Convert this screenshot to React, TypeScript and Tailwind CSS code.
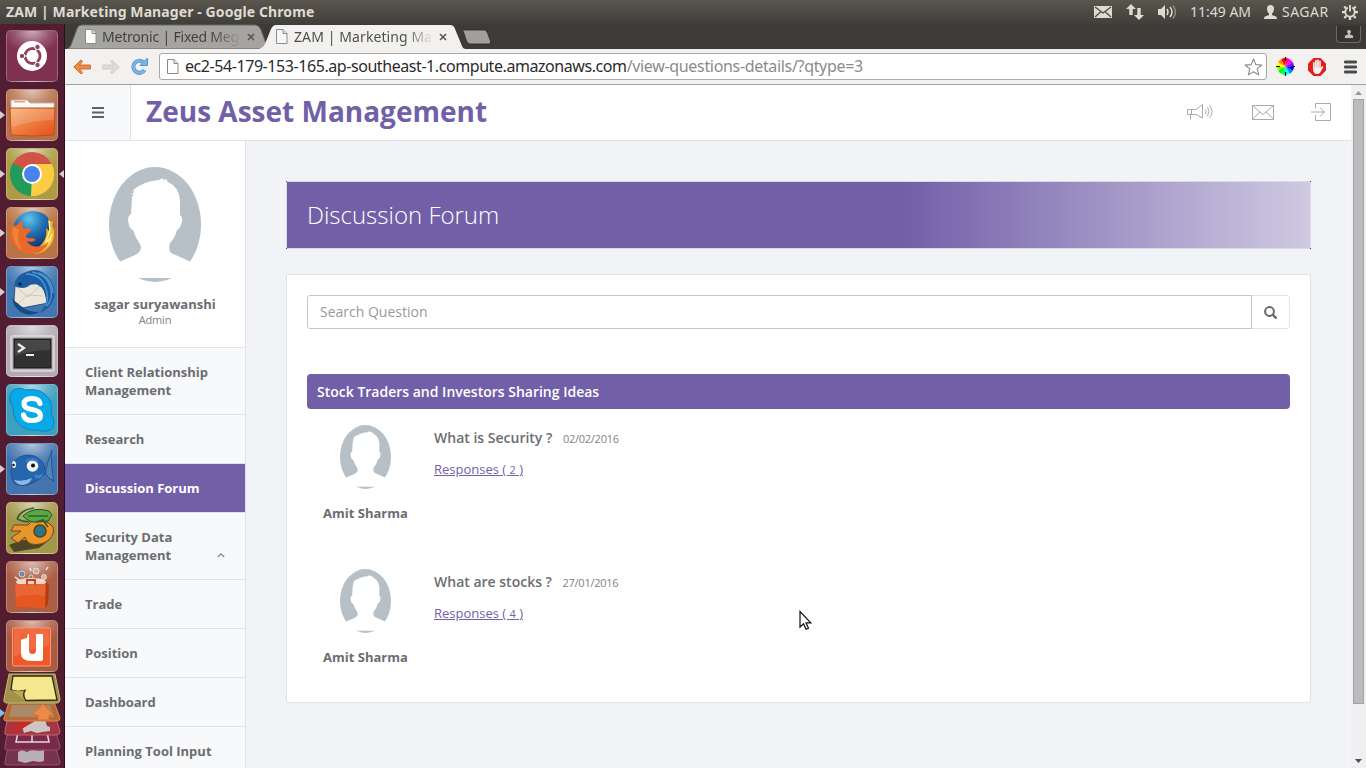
import React from "react";

const GLOSS = "radial-gradient(ellipse 60% 45% at 50% 0%, rgba(255,255,255,.6) 0%, rgba(255,255,255,.18) 60%, rgba(255,255,255,0) 100%)";

function Tile({ bg, left, right, children }: { bg: string; left?: boolean; right?: boolean; children: React.ReactNode }) {
  return (
    <div className="relative flex h-[52px] w-full shrink-0 justify-center pr-px">
      {left && <span className="absolute left-0 top-[22px] border-y-[4px] border-l-[5px] border-y-transparent border-l-[#d5cdd0]" />}
      {right && <span className="absolute right-0 top-[22px] border-y-[4px] border-r-[5px] border-y-transparent border-r-[#d5cdd0]" />}
      <div
        className="h-[52px] w-[52px] overflow-hidden rounded-[5px] border border-white/25"
        style={{ background: `${GLOSS}, ${bg}` }}
      >
        <svg viewBox="1 1 50 50" className="block h-[50px] w-[50px]">{children}</svg>
      </div>
    </div>
  );
}

function Launcher() {
  return (
    <aside className="flex w-[65px] shrink-0 flex-col gap-[7px] overflow-hidden border-r border-[#2e0c19] bg-[#521c31] pt-[6px]">
      <Tile bg="#7f3150">
        <circle cx="26" cy="26" r="15" fill="#fff" />
        <circle cx="26.500" cy="26" r="7.500" fill="none" stroke="#93415c" strokeWidth="3" />
        <path d="M26.500 26H15M26.500 26l6-10.400M26.500 26l6 10.400" stroke="#fff" strokeWidth="1.200" />
        <circle cx="26.500" cy="26" r="5.900" fill="#fff" />
        <g fill="#93415c" stroke="#fff" strokeWidth="1">
          <circle cx="16" cy="26" r="2.700" />
          <circle cx="31.500" cy="17" r="2.700" />
          <circle cx="31.500" cy="35" r="2.700" />
        </g>
      </Tile>
      <Tile bg="#b5704c" left>
        <defs>
          <linearGradient id="fold" x1="0" y1="0" x2="1" y2="1">
            <stop offset="0" stopColor="#f3b173" /><stop offset=".5" stopColor="#ee7c3d" /><stop offset="1" stopColor="#e4501f" />
          </linearGradient>
        </defs>
        <path d="M5 11h16l3 3h24v7H5z" fill="#fafafa" stroke="#c9b0a5" />
        <path d="M8 12.800h11" stroke="#f0a176" strokeWidth="1.600" />
        <path d="M4 19h45l-1 27q-22 2-43 0z" fill="url(#fold)" stroke="#c4501f" />
        <path d="M5 20h43l-.4 11q-18 0-42 7z" fill="#fff" opacity=".16" />
      </Tile>
      <Tile bg="#ad9b45" left right>
        <path d="M26 26L6.900 15A22 22 0 0 1 45.600 16z" fill="#d05347" />
        <path d="M26 26L6.900 15A22 22 0 0 0 25 48l9-17z" fill="#229a5a" />
        <path d="M26 26l-1 22A22 22 0 0 0 45.600 16H26z" fill="#fcd147" />
        <path d="M45.600 16H26l8 15-9 17A22 22 0 0 0 45.600 16" fill="#fbcb42" />
        <circle cx="26" cy="26" r="10" fill="#fff" />
        <circle cx="26" cy="26" r="8" fill="#4784ea" />
      </Tile>
      <Tile bg="#b87446" left>
        <defs>
          <radialGradient id="globe" cx=".4" cy=".2" r=".7"><stop offset="0" stopColor="#61c4ec" /><stop offset=".5" stopColor="#2273b5" /><stop offset="1" stopColor="#123a76" /></radialGradient>
        </defs>
        <circle cx="27" cy="24" r="20" fill="url(#globe)" />
        <path d="M42 11l2 3 3 1-1 3 2 5q1 12-6 18-6 6-15 6-6 0-10-3 12 1 19-7 6-8 4-16l3 3q1-6-1-13z" fill="#f4b731" />
        <path d="M43 14l1 9-4 12q4-2 6-8-2 12-13 17" stroke="#fff08a" strokeWidth="1.500" fill="none" />
        <path d="M6 16l-1 4q-3 12 4 19 7 9 18 8 11-1 16-12-8 6-16 4-5-2-6-5 5 2 9-1l-3-2q-5 1-7-1l1-3 5-4-5-2-4 1-1-9-5 5-3 1z" fill="#e9682a" />
        <path d="M7 20q-2 15 9 23-6-11-3-20z" fill="#f39a3c" opacity=".6" />
      </Tile>
      <Tile bg="#4476b0" left>
        <path d="M9 20l27-3 6 20-26 5-8-7z" fill="#ece6da" stroke="#1b3f6f" strokeWidth=".8" />
        <path d="M9 20l13 11 14-13M12 38l9-9 16 1" stroke="#c9c1b2" strokeWidth=".8" fill="none" />
        <path d="M8 21Q9 9 20 6q14-6 24 7 6 9 4 19-3 11-15 15 6-5 7-12 0-9-5-14-5-4-10-3-6 7-17 2z" fill="#1a5da4" />
        <path d="M6 32q2 12 13 16 8 2 14-2-12 0-18-6-6-4-9-8z" fill="#124a8a" />
        <path d="M20 8q14 0 19 12t0 20M26 6q14 2 18 14t-3 20M33 7q13 5 14 20" stroke="#4c96d2" strokeWidth="1.400" fill="none" />
        <circle cx="14" cy="18" r="1.500" fill="#06172f" />
      </Tile>
      <Tile bg="#b2abb0">
        <rect x="5" y="11" width="43" height="35" rx="1" fill="#b9b5b8" stroke="#f2eff1" />
        <rect x="8" y="14" width="37" height="29" fill="#303130" stroke="#161616" />
        <path d="M9 15h35v10Q25 25 9 31z" fill="#fff" opacity=".1" />
        <path d="M12 19l6 4-6 4" stroke="#eee" strokeWidth="2.200" fill="none" />
        <path d="M20 30h8" stroke="#eee" strokeWidth="2" />
      </Tile>
      <Tile bg="#3e9fbe">
        <path d="M6 7q7-5 13-1 17-3 25 10 3 7 1 13 5 8 1 16-6 4-13 1-14 2-22-8-5-7-4-15Q1 14 6 7z" fill="#09a9e7" stroke="#0687bf" />
        <path d="M34 19.500q-1-5-8-5-8 0-8 5.500 0 4.200 8 5.500 8.500 1.300 8.500 6 0 5-8.500 5-7.500 0-8.500-5.500" fill="none" stroke="#fff" strokeWidth="5.200" strokeLinecap="round" />
      </Tile>
      <Tile bg="#4374ad" left>
        <path d="M39 30q4-16 7-23-2 12 2 31-6-2-9-8z" fill="#4a84be" stroke="#1c4c85" strokeWidth=".8" />
        <path d="M6 21Q12 12 23 12q13 1 16 14 1 3 0 5-5 6-11 8-9 6-19 2-6-6-3-20z" fill="#2465ae" stroke="#1b5598" />
        <path d="M8 37q9 2 18-2-2 6-9 7-6 0-9-5z" fill="#8db9e2" />
        <path d="M29 31q4 3 8-1l-1 4q-4 3-7 0z" fill="#4083c8" />
        <circle cx="26.500" cy="23" r="5.800" fill="#f2f2f2" /><circle cx="27" cy="22.500" r="2" fill="#111" />
        <path d="M20 19q4-5 12-1" stroke="#3c7dc2" strokeWidth="2.500" fill="none" />
        <ellipse cx="8" cy="21.500" rx="2" ry="3.500" fill="#e7ecf2" /><circle cx="7.500" cy="22" r="1.200" fill="#111" />
      </Tile>
      <Tile bg="#a3984a">
        <path d="M3 43l13-5 26 1-9 7-25 4z" fill="#302c1c" opacity=".75" />
        <path d="M5 36l10-7-10 0 3-6 14 0 4-4q14-3 21 6 2 6-4 13-8 6-18 4-5-2-6-7l-7 6z" fill="#e8952c" stroke="#7b4316" />
        <circle cx="34" cy="29" r="6" fill="#24798a" stroke="#68390e" strokeWidth="1.500" />
        <path d="M17 14Q27 4 43 9l3 4-4 6-10 1q-9 1-15-6z" fill="#58a845" stroke="#254e1f" />
        <path d="M11 17Q14 8 28 6M22 14l20 0M30 20l7-2 5 7M11 17q6 3 12 3" stroke="#2e6429" strokeWidth="1.700" fill="none" />
      </Tile>
      <Tile bg="#ab5f45">
        <g opacity=".9">
          <circle cx="16" cy="13" r="3" fill="#6b8aa9" stroke="#fff" strokeWidth=".7" /><circle cx="30" cy="10" r="3" fill="#bcb6b0" stroke="#fff" strokeWidth=".7" />
          <circle cx="38" cy="16" r="2.500" fill="#d6b9ae" stroke="#fff" strokeWidth=".7" /><circle cx="25" cy="16" r="2" fill="#79859a" stroke="#fff" strokeWidth=".7" />
          <path d="M9 16l4 3M24 7l1 3M40 9l2-3M32 18l5 2" stroke="#fff" strokeWidth="1.300" />
        </g>
        <ellipse cx="25" cy="21" rx="15" ry="4" fill="#ffe9dc" opacity=".85" />
        <path d="M9 23h31l-1 24-29-1z" fill="#e7561f" /><path d="M40 21l3 3-1 19-3 4z" fill="#b53b10" />
        <path d="M21 24v-5h8v5" fill="none" stroke="#c14012" strokeWidth="1.800" />
        <path d="M9 23h30v12q-13-3-29 1z" fill="#fff" opacity=".09" />
      </Tile>
      <Tile bg="#aa5c43">
        <rect x="6.500" y="8" width="38" height="38" rx="1.500" fill="#f0582a" stroke="#ff9d7b" />
        <path d="M8 9h35v17q-15 1-35 11z" fill="#fff" opacity=".12" />
        <path d="M15 14h8v16q0 4 3.500 4t3.500-4V14h7v25q0 2-2 2H25q-10 0-10-8z" fill="#fff" />
        <path d="M14 20v-7h8l-1 5z" fill="#f0653a" />
      </Tile>
      <svg viewBox="0 0 65 96" className="-mt-[7px] block h-[96px] w-[65px] shrink-0">
        <path d="M9 70h45l6 20q0 3-3 3H7q-3 0-2-3z" fill="#76324f" stroke="#94536b" />
        <path d="M18 80l4-2 5 2 6-3 5 2 6-1v11l-4 1-7-1-8 2-7-2z" fill="#b9b0b4" />
        <path d="M9 54h45l6 20q0 4-3 4H7q-3 0-2-4z" fill="#7a2a49" stroke="#9b526a" />
        <path d="M18 60l-2 10h33l-2-10M32 60v10" fill="none" stroke="#e7d8dd" strokeWidth="1.500" />
        <path d="M9 40h45l6 19q0 4-3 4H7q-3 0-2-4z" fill="#a53543" stroke="#c3646a" />
        <path d="M22 54l8-8 14-2 3 10 3 1v4l-8 1-5 1-6-2-7 2z" fill="#ccc6c6" />
        <path d="M11 59q-1-3 5-6l20-10 4 3-20 12q-5 3-9 1z" fill="#c52b28" />
        <path d="M9 30h45l6 16q0 3-3 3H7q-4 0-3-3z" fill="#b66a3a" stroke="#e08b4a" />
        <path d="M12 33h38l4 12H9z" fill="#a98a67" />
        <path d="M43 32l11 11h-5v5H38v-5h-6z" fill="#ee8a47" stroke="#d86f30" />
        <path d="M9 2h46l5 25q0 4-3 4H7q-4 0-3-4z" fill="#a1924b" stroke="#c6b970" />
        <path d="M13 4h39l5 24-31 .5q-4-5-1-10-9 2-14-1z" fill="#f4e78f" stroke="#2d2912" strokeWidth="1.300" />
        <path d="M11 17.500l14 11q-4-5-1-10-7 2-13-1z" fill="#b9ab4e" />
        <path d="M0 37l5 4-5 4z" fill="#79c4e8" />
      </svg>
    </aside>
  );
}

function SystemBar() {
  return (
    <div className="flex h-6 shrink-0 items-center justify-between bg-gradient-to-b from-[#59564d] to-[#403f3a] pl-[6px] pr-[8px] font-['Noto_Sans',sans-serif] text-[#dfdbd2]">
      <span className="whitespace-nowrap text-[14px] font-bold leading-6 tracking-[0.1px]">ZAM | Marketing Manager - Google Chrome</span>
      <div className="flex items-center text-[14px]">
        <svg width="18" height="12" viewBox="0 0 18 12" className="mr-[14px]">
          <rect width="18" height="12" fill="#dfdbd2" />
          <path d="M1 1l8 6 8-6M1 11l5.500-5M17 11l-5.500-5" stroke="#4c4a43" strokeWidth="1.300" fill="none" />
        </svg>
        <svg width="18" height="16" viewBox="0 0 18 16" className="mr-[14px]">
          <path d="M5 0l5 5H6.700v6H3.300V5H0zM13 16l-5-5h3.300V4h3.400v7H18z" fill="#dfdbd2" />
        </svg>
        <svg width="20" height="16" viewBox="0 0 20 16" className="mr-[12px]">
          <path d="M0 5h3l4-4v14l-4-4H0z" fill="#dfdbd2" />
          <path d="M9 5q2 3 0 6M12 3q4 5 0 10" stroke="#dfdbd2" strokeWidth="1.500" fill="none" />
          <path d="M15 1.500q5 6.500 0 13" stroke="#8f8c83" strokeWidth="1.500" fill="none" />
        </svg>
        <span className="w-[62px] whitespace-nowrap leading-5">11:49 AM</span>
        <svg width="13" height="14" viewBox="0 0 13 14" className="ml-[12px] mr-[5px]">
          <path d="M6.500 0q3.500 0 3.500 4 0 3-2 4.500v1.500l4 1.500q1 .5 1 2.500H0q0-2 1-2.500L5 10V8.500Q3 7 3 4q0-4 3.500-4z" fill="#dfdbd2" />
        </svg>
        <span className="w-[48px] whitespace-nowrap leading-5 tracking-[0.5px]">SAGAR</span>
        <svg width="16" height="16" viewBox="0 0 16 16" className="ml-[12px]" fill="none" stroke="#dfdbd2">
          <path d="M5.800 3.700a4.800 4.800 0 1 0 4.400 0M8 1v6.500" strokeWidth="1.900" />
          <path d="M8 13v3M0 8.200h3M13 8.200h3M2.300 2.500l1.600 1.600M13.700 2.500l-1.600 1.600M2.300 14l1.900-1.900M13.700 14l-1.900-1.900" strokeWidth="2.300" />
        </svg>
      </div>
    </div>
  );
}

function PageIcon({ className, fill = "#fdfdfd" }: { className?: string; fill?: string }) {
  return (
    <svg width="12" height="15" viewBox="0 0 12 15" className={className}>
      <path d="M.5.500h6.500l4 4V14.500H.5z" fill={fill} stroke="#8b8b8b" />
      <path d="M7 .5v4h4" fill="#e2e2e2" stroke="#8b8b8b" />
    </svg>
  );
}

function CloseX() {
  return (
    <svg width="8" height="8" viewBox="0 0 8 8" className="ml-[7px] shrink-0">
      <path d="M1 1l6 6M7 1L1 7" stroke="#54534f" strokeWidth="1.500" />
    </svg>
  );
}

function Tabs() {
  return (
    <div className="relative flex h-[25px] shrink-0 bg-[#3c3b37] font-['Noto_Sans',sans-serif]">
      <svg width="440" height="25" viewBox="0 0 440 25" className="absolute left-0 top-0">
        <path d="M2 25Q5 24 6 21L12 5q1-4 5-4H190q4 0 6 5l7 19z" fill="#a5a4a1" stroke="#6a6965" />
        <path d="M194 25q4-1 6-5l6-15q2-4 5-4H385q4 0 5 4l7 17q1 3 4 3z" fill="#f2f1f0" />
        <path d="M397.500 6h22q2 0 3 3l3 8q1 3-2 3h-18q-3 0-4-3l-3-9q-1-2-1-2z" fill="#a09f9b" stroke="#2b2a27" strokeWidth=".8" />
      </svg>
      <div className="relative flex w-[191px] items-center pl-[20px]">
        <PageIcon className="mr-[5px] shrink-0" />
        <span className="w-[138px] whitespace-nowrap bg-[linear-gradient(90deg,#403f3b_80%,#a5a4a1_101%)] bg-clip-text text-[14px] tracking-[-0.2px] text-transparent">
          Metronic | Fixed Meg
        </span>
        <CloseX />
      </div>
      <div className="relative flex items-center pl-[20px]">
        <PageIcon className="mr-[6px] shrink-0" fill="#f8f8f8" />
        <span className="w-[138px] whitespace-nowrap bg-[linear-gradient(90deg,#4a4a48_80%,#f2f1f0_101%)] bg-clip-text text-[14px] tracking-[0.1px] text-transparent">
          ZAM | Marketing Ma
        </span>
        <CloseX />
      </div>
      <div className="ml-auto mr-[5px] mt-[2px] flex h-[17px] w-[25px] items-center justify-center rounded-b-[4px] border border-t-0 border-[#6b6a66] bg-[#353430]">
        <svg width="10" height="10" viewBox="0 0 10 10"><path d="M5 .5a2.300 2.300 0 0 1 1 4.400l3.500 1.600V9.500H.5V6.500l3.500-1.600A2.300 2.300 0 0 1 5 .5z" fill="#bfbeba" stroke="#1c1b19" strokeWidth=".6" /></svg>
      </div>
    </div>
  );
}

function Toolbar() {
  return (
    <div className="flex h-9 shrink-0 items-center border-b border-[#a3a19e] bg-[#f2f1f0] pl-[8px] font-['Noto_Sans',sans-serif]">
      <svg width="18" height="16" viewBox="0 0 18 16" className="mr-[11px]">
        <path d="M.8 8L8 1l1.500 1.500L6.500 6H17q1 0 1 2t-1 2H6.500l3 3.500L8 15z" fill="#ec8b42" stroke="#c4602a" strokeWidth=".9" />
      </svg>
      <svg width="18" height="16" viewBox="0 0 18 16" className="mr-[11px]">
        <path d="M17.200 8L10 1 8.500 2.500l3 3.500H1Q0 6 0 8t1 2h10.500l-3 3.500L10 15z" fill="#dddcda" stroke="#c9c8c6" strokeWidth=".8" />
      </svg>
      <svg width="17" height="17" viewBox="0 0 17 17" className="mr-[11px]">
        <path d="M13.500 12a6 6 0 1 1-1-7.500" fill="none" stroke="#5a95cf" strokeWidth="4" />
        <path d="M9 7.500h7.500V0z" fill="#7fb2e3" stroke="#5a95cf" />
        <path d="M13.500 12a6 6 0 1 1-1-7.500" fill="none" stroke="#7fb2e3" strokeWidth="2.500" />
      </svg>
      <div className="flex h-[27px] w-[1108px] items-center rounded-[3px] border border-[#aaa9a7] bg-white pl-[7px] pr-[3px]">
        <PageIcon className="mr-[6px]" />
        <span className="whitespace-nowrap pb-[2px] text-[16px] leading-[22px] tracking-[-0.33px] text-[#8b8b8b]">
          <span className="tracking-[-0.43px] text-[#2b2b2b]">ec2-54-179-153-165.ap-southeast-1.compute.amazonaws.com</span>/view-questions-details/?qtype=3
        </span>
        <svg width="19" height="18" viewBox="0 0 19 18" className="ml-auto">
          <path d="M9.500 1l2.300 5.600 6 .4-4.600 3.900 1.500 6-5.200-3.200-5.200 3.200 1.500-6L1.200 7l6-.4z" fill="#fff" stroke="#888" strokeWidth="1.100" strokeLinejoin="round" />
        </svg>
      </div>
      <div className="ml-[9px] flex h-[19px] w-[19px] items-center justify-center">
        <svg width="19" height="19" viewBox="0 0 19 19">
          <g transform="translate(9.500 9.500)">
            {["#f0f", "#80f", "#00f", "#08f", "#0ff", "#0f8", "#0f0", "#8f0", "#ff0", "#f80", "#f00", "#f08"].map((c, i) => (
              <path key={c} d="M0 0V-8.500A8.500 8.500 0 0 1 4.300-7.300z" fill={c} transform={`rotate(${i * 30 + 30})`} />
            ))}
            <path d="M0-9.500v4M0 5.500v4M-9.500 0h4M5.500 0h4" stroke="#111" strokeWidth="1.200" />
          </g>
        </svg>
      </div>
      <svg width="18" height="18" viewBox="0 0 18 18" className="ml-[13px]">
        <path d="M5.500 0h7L18 5.500v7L12.500 18h-7L0 12.500v-7z" fill="#e0201f" />
        <path d="M5 10V5q0-1 .8-1t.8 1v4.500h.4V3q0-1 .9-1t.9 1v6.500h.3V2.500q0-1 .9-1t.9 1v7h.3V3.500q0-1 .8-1t.8 1V10l1-1.500q1-.8 1.500.2L12.500 14q-.8 2-3.500 2-4 0-4-6z" fill="#f6f2ef" />
      </svg>
      <svg width="13" height="14" viewBox="0 0 13 14" className="ml-[18px]">
        <path d="M1.300 2h10.400M1.300 7h10.400M1.300 12h10.400" stroke="#4b4b4b" strokeWidth="2.800" strokeLinecap="round" />
      </svg>
    </div>
  );
}

function Avatar({ className, id }: { className: string; id: string }) {
  return (
    <svg viewBox="0 0 92 115" preserveAspectRatio="none" className={className}>
      <defs><clipPath id={id}><ellipse cx="46" cy="57.500" rx="46" ry="57.500" /></clipPath></defs>
      <g clipPath={`url(#${id})`}>
        <path
          d="M0 0H92V80L81 94.500L62 86Q59 83 61 76Q66 71 68 63Q72 61 73 54Q74 50 71 48L71 33Q70 20 59 15L57 12L54 13L54 11L50 13Q35 14 24 23L25 25L22 28L25 27L23 30L22 47Q19 49 19 53Q20 62 24 63Q26 70 31 77L32 80Q32 86 24 89L11 94.500L0 80zM25 111H67V115H25z"
          fill="#b7c0c7"
        />
      </g>
    </svg>
  );
}

const NAV: { label: string; active?: boolean; caret?: boolean }[] = [
  { label: "Client Relationship Management" },
  { label: "Research" },
  { label: "Discussion Forum", active: true },
  { label: "Security Data Management", caret: true },
  { label: "Trade" },
  { label: "Position" },
  { label: "Dashboard" },
  { label: "Planning Tool Input" },
];

function Sidebar() {
  return (
    <nav className="w-[181px] shrink-0 overflow-hidden border-r border-[#e1e2e5] bg-[#f7f9fb]">
      <div className="flex h-[207px] flex-col items-center border-b border-[#e1e2e5] bg-white pt-[26px]">
        <Avatar className="block h-[115px] w-[92px]" id="user" />
        <div className="mt-[13px] text-[13px] font-bold leading-[18px] text-[#6c6d70]">sagar suryawanshi</div>
        <div className="text-[11px] leading-[13px] tracking-[-0.2px] text-[#808285]">Admin</div>
      </div>
      {NAV.map((n) => (
        <a
          key={n.label}
          className={
            "flex items-end justify-between border-b border-[#e1e2e5] px-[20px] py-[15px] text-[13px] font-bold leading-[18px] " +
            (n.active ? "bg-[#715fa8] text-white" : "text-[#6c6d70]")
          }
        >
          <span className="w-[128px]">{n.label}</span>
          {n.caret && (
            <svg width="8" height="18" viewBox="0 0 8 18"><path d="M.8 11L4 7.800 7.200 11" fill="none" stroke="#6f86a6" strokeWidth="1.200" /></svg>
          )}
        </a>
      ))}
    </nav>
  );
}

function Header() {
  return (
    <header className="flex h-14 shrink-0 items-center border-b border-[#e1e2e5] bg-white">
      <div className="flex h-full w-[66px] items-center justify-center border-r border-[#e1e2e5] bg-[#f7f9fb] pl-px">
        <svg width="12" height="11" viewBox="0 0 12 11"><path d="M0 1h12M0 5.500h12M0 10h12" stroke="#606163" strokeWidth="1.800" /></svg>
      </div>
      <h1 className="ml-[15px] pb-[3px] text-[28px] font-bold leading-[40px] text-[#715fa8]">Zeus Asset Management</h1>
      <div className="ml-auto mr-[20px] flex items-center pb-px">
        <svg width="26" height="16" viewBox="0 0 26 16" fill="none" stroke="#aaa9ab">
          <path d="M.5 5.500H9l6.500-5v13.500L9 10.500H.5zM4.500 5.500v5M3.500 11v4.500M18.500 5.500q1.500 2.200 0 4.500M20.500 3.500q3 4 0 8.500M22.500 1.500q5 6 0 12.500" />
        </svg>
        <svg width="22" height="15" viewBox="0 0 22 15" className="ml-[39px]" fill="none" stroke="#aaa9ab">
          <path d="M.5.500h21v14H.5zM.5.500L11 9.500 21.500.5M.5 14l7.500-7M21.500 14L14 7" />
        </svg>
        <svg width="20" height="18" viewBox="0 0 20 18" className="ml-[37px]" fill="none" stroke="#aaa9ab">
          <path d="M4.500 5.500V.5h15v17h-15v-5.500M0 9h13.500M9 4.500l4.500 4.500L9 13.500" />
        </svg>
      </div>
    </header>
  );
}

function Question({ id, title, date, count }: { id: string; title: string; date: string; count: number }) {
  return (
    <article className="flex h-36">
      <div className="flex w-[117px] flex-col items-center">
        <Avatar className="block h-16 w-[51px]" id={id} />
        <div className="mt-[15px] whitespace-nowrap text-[13px] font-bold leading-[18px] text-[#6c6d70]">Amit Sharma</div>
      </div>
      <div className="ml-[10px] pt-[3px]">
        <div className="flex items-baseline gap-[10.5px] leading-5 text-[#6c6d70]">
          <span className="text-[14px] font-semibold">{title}</span>
          <span className="text-[11px] tracking-[-0.25px] text-[#808285]">{date}</span>
        </div>
        <a className="mt-[11px] block text-[13px] leading-[18px] text-[#715fa8] underline">
          Responses ( <span className="text-[11px]">{count}</span> )
        </a>
      </div>
    </article>
  );
}

function Main() {
  return (
    <main className="min-w-0 flex-1 bg-[#f1f3f7] px-[40px] pt-[40px]">
      <div className="relative flex h-[68px] w-[1025px] items-center border border-[#dcdbe4] bg-[linear-gradient(90deg,#715fa8_0%,#715fa8_60%,#b1a7d0_87%,#cfc9e1_100%)] pl-[20px]">
        <span className="absolute -left-px -top-px h-px w-px bg-[#2a42a0]" />
        <span className="absolute -right-px -top-px h-px w-px bg-[#2a42a0]" />
        <span className="absolute -bottom-px -left-px h-px w-px bg-[#2a42a0]" />
        <span className="absolute -bottom-px -right-px h-px w-px bg-[#2a42a0]" />
        <h2 className="text-[24px] font-light leading-8 text-white">Discussion Forum</h2>
      </div>
      <section className="mt-[25px] h-[429px] w-[1025px] rounded-[2px] border border-[#e2e3e6] bg-white px-[20px] pt-[20px]">
        <div className="flex h-[34px]">
          <div className="flex w-[945px] items-center rounded-l-[3px] border border-[#c7c8ca] pb-[2px] pl-[12px] text-[14px] text-[#98999c]">Search Question</div>
          <div className="flex w-[38px] items-center justify-center rounded-r-[3px] border border-l-0 border-[#e2e3e6] pr-px">
            <svg width="13" height="13" viewBox="0 0 13 13" fill="none" stroke="#66676a"><circle cx="5.500" cy="5.500" r="4.400" strokeWidth="2" /><path d="M8.500 8.500l4 4" strokeWidth="2.400" /></svg>
          </div>
        </div>
        <h3 className="mb-[16px] mt-[45px] flex h-[35px] items-center rounded-[4px] bg-[#715fa8] pl-[10px] text-[14px] font-semibold text-white">
          Stock Traders and Investors Sharing Ideas
        </h3>
        <Question id="q1" title="What is Security ?" date="02/02/2016" count={2} />
        <Question id="q2" title="What are stocks ?" date="27/01/2016" count={4} />
      </section>
    </main>
  );
}

function Scrollbar() {
  return (
    <div className="flex w-[15px] shrink-0 flex-col items-center bg-[#f0f0f0]">
      <svg width="15" height="14" viewBox="0 0 15 14" className="shrink-0"><path d="M4 10h7L7.500 6z" fill="#999" /></svg>
      <div className="mr-px h-[605px] w-[11px] shrink-0 border border-[#a3a3a3] bg-[#bbb]" />
      <svg width="15" height="14" viewBox="0 0 15 14" className="mb-px mt-auto shrink-0"><path d="M4 6h7l-3.500 4z" fill="#4d4d4d" /></svg>
    </div>
  );
}

export default function App() {
  return (
    <div className="relative flex h-[768px] w-[1366px] flex-col overflow-hidden font-['Open_Sans',sans-serif]">
      <SystemBar />
      <div className="flex min-h-0 flex-1">
        <Launcher />
        <div className="flex min-w-0 flex-1 flex-col">
          <Tabs />
          <Toolbar />
          <div className="flex min-h-0 flex-1">
            <div className="flex min-w-0 flex-1 flex-col">
              <Header />
              <div className="flex min-h-0 flex-1">
                <Sidebar />
                <Main />
              </div>
            </div>
            <Scrollbar />
          </div>
        </div>
      </div>
      <svg width="13" height="20" viewBox="0 0 13 20" className="absolute left-[799px] top-[610px]">
        <path d="M1 1.500v15.500l3.500-3.300L7 19.300l2.500-1-2.500-5.500h4.800z" fill="#fff" stroke="#111" strokeWidth="1.200" />
      </svg>
    </div>
  );
}
